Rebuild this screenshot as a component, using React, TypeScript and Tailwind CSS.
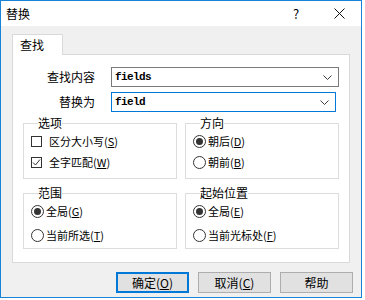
import type { ReactNode } from 'react';

const ui = { fontFamily: '"Noto Sans CJK SC", "Noto Sans", sans-serif' };
const mono = { fontFamily: '"Liberation Mono", "DejaVu Sans Mono", monospace' };

// ── small controls ───────────────────────────────────────────────────────────
const Chevron = () => (
  <svg width="9" height="5" viewBox="0 0 9 5" className="shrink-0">
    <polyline points="0.5,0.5 4.5,4.5 8.5,0.5" fill="none" stroke="#3c3c3c" strokeWidth="1" />
  </svg>
);

const Combo = ({ value, width, focused }: { value: string; width: string; focused?: boolean }) => (
  <div
    className={`${width} h-[20px] bg-white border flex items-center pl-[3px] pr-[6px] ${
      focused ? 'border-[#0078d7]' : 'border-[#7a7a7a]'
    }`}
  >
    <span className="flex-1 text-[11px] font-bold tracking-[-0.6px] text-black" style={mono}>
      {value}
    </span>
    <Chevron />
  </div>
);

const Check = ({ checked, label, k }: { checked?: boolean; label: string; k: string }) => (
  <div className="h-[20px] flex items-center">
    <div className="w-[11px] h-[11px] border border-[#333] bg-white flex items-center justify-center">
      {checked && (
        <svg width="9" height="9" viewBox="0 0 9 9">
          <polyline points="1,4.5 3.5,7 8,1.5" fill="none" stroke="#333" strokeWidth="1" />
        </svg>
      )}
    </div>
    <span className="ml-[7px] text-[11px] leading-none text-black">
      {label}(<u>{k}</u>)
    </span>
  </div>
);

const Radio = ({ checked, label, k }: { checked?: boolean; label: string; k: string }) => (
  <div className="h-[20px] flex items-center">
    <div className="w-[13px] h-[13px] rounded-full border border-[#333] bg-white flex items-center justify-center">
      {checked && <div className="w-[7px] h-[7px] rounded-full bg-[#333]" />}
    </div>
    <span className="ml-[2px] text-[11px] leading-none text-black">
      {label}(<u>{k}</u>)
    </span>
  </div>
);

const Group = ({ title, children, className }: { title: string; children: ReactNode; className?: string }) => (
  <fieldset className={`w-[154px] border border-[#dcdcdc] m-0 p-0 pl-[7px] ${className ?? ''}`}>
    <legend className="ml-[7px] p-0 text-[12px] leading-[16px] text-black">{title}</legend>
    {children}
  </fieldset>
);

const Button = ({ children, primary }: { children: ReactNode; primary?: boolean }) => (
  <div
    className={`w-[73px] h-[21px] bg-[#e1e1e1] flex items-center justify-center text-[12px] text-black ${
      primary ? 'border-2 border-[#0078d7]' : 'border border-[#adadad]'
    }`}
  >
    {children}
  </div>
);

export default function App() {
  return (
    <div className="w-[365px] h-[300px] bg-white" style={ui}>
      <div className="w-[362px] h-[298px] border border-[#1883d7] bg-[#f0f0f0] flex flex-col">
        {/* title bar */}
        <div className="h-[25px] bg-white flex items-center shrink-0">
          <span className="ml-[5px] text-[12px] text-black flex-1">替换</span>
          <span className="w-[46px] text-center text-[13px] text-black">?</span>
          <div className="w-[40px] flex justify-center mr-[2px]">
            <svg width="11" height="11" viewBox="0 0 11 11">
              <path d="M0.5,0.5 L10.5,10.5 M10.5,0.5 L0.5,10.5" stroke="#111" strokeWidth="1" />
            </svg>
          </div>
        </div>

        {/* client */}
        <div className="flex-1 flex flex-col px-[11px] pt-[8px]">
          {/* tab header */}
          <div className="flex">
            <div className="relative z-10 w-[51px] h-[21px] -mb-[1px] bg-white border border-b-0 border-[#d9d9d9] pl-[7px] text-[12px] leading-[20px] text-black">
              查找
            </div>
          </div>

          {/* tab panel */}
          <div className="h-[209px] bg-white border border-[#d9d9d9] pt-[12px] pl-[10px]">
            <div className="flex items-center">
              <span className="w-[72px] text-right text-[12px] text-black">查找内容</span>
              <div className="ml-[16px]">
                <Combo value="fields" width="w-[228px]" />
              </div>
            </div>
            <div className="flex items-center mt-[5px]">
              <span className="w-[72px] text-right text-[12px] text-black">替换为</span>
              <div className="ml-[16px]">
                <Combo value="field" width="w-[225px]" focused />
              </div>
            </div>

            <div className="flex gap-[8px] mt-[3px]">
              <Group title="选项" className="pb-[6px]">
                <div className="flex flex-col gap-[1px]">
                  <Check label="区分大小写" k="S" />
                  <Check label="全字匹配" k="W" checked />
                </div>
              </Group>
              <Group title="方向" className="pb-[6px]">
                <div className="flex flex-col gap-[1px]">
                  <Radio label="朝后" k="D" checked />
                  <Radio label="朝前" k="B" />
                </div>
              </Group>
            </div>

            <div className="flex gap-[8px] mt-[6px]">
              <Group title="范围" className="pb-[3px]">
                <div className="flex flex-col gap-[4px]">
                  <Radio label="全局" k="G" checked />
                  <Radio label="当前所选" k="T" />
                </div>
              </Group>
              <Group title="起始位置" className="pb-[3px]">
                <div className="flex flex-col gap-[4px]">
                  <Radio label="全局" k="E" checked />
                  <Radio label="当前光标处" k="F" />
                </div>
              </Group>
            </div>
          </div>

          {/* buttons */}
          <div className="flex justify-end gap-[9px] mt-[9px] -mr-[3px]">
            <Button primary>
              确定(<u>O</u>)
            </Button>
            <Button>
              取消(<u>C</u>)
            </Button>
            <Button>帮助</Button>
          </div>
        </div>
      </div>
    </div>
  );
}
